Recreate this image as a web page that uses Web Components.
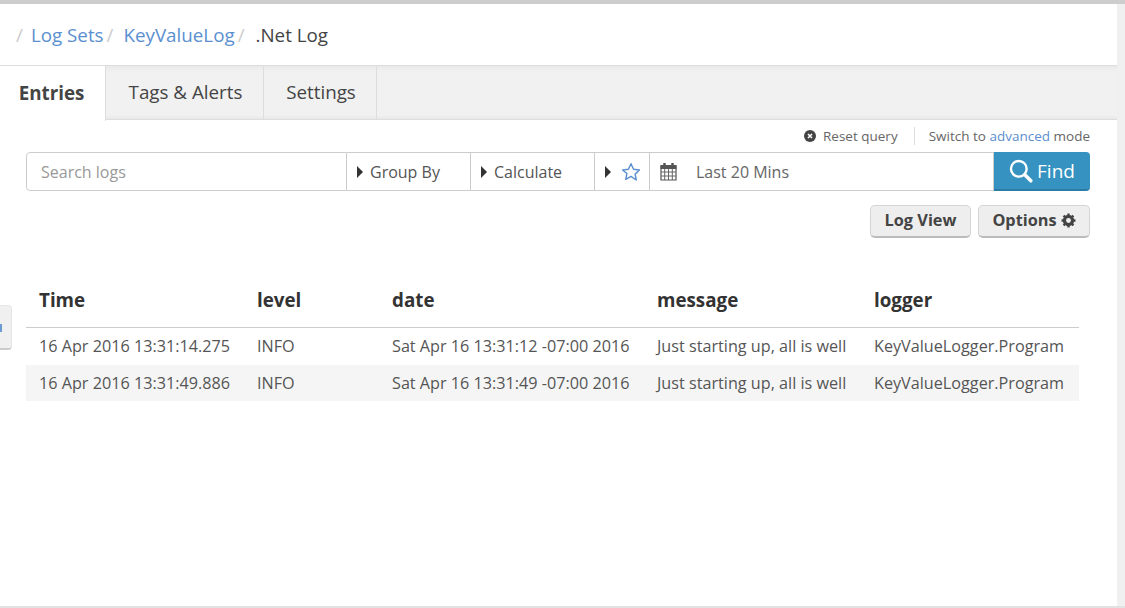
<!DOCTYPE html>
<html>
<head>
<meta charset="utf-8">
<style>
  html, body { margin: 0; height: 100%; }
  body { font-family: "Open Sans", sans-serif; color: #444; background: #fff; overflow: hidden; }
</style>
</head>
<body>
<log-page>
  <log-breadcrumb></log-breadcrumb>
  <log-tabs></log-tabs>
  <query-links></query-links>
  <query-bar></query-bar>
  <view-buttons></view-buttons>
  <log-table></log-table>
</log-page>
<script>
/* global HTMLElement:false */

const define = (name, html) => {
  const template = document.createElement('template')
  template.innerHTML = html
  window.customElements.define(name, class extends HTMLElement {
    constructor () {
      super()
      this.attachShadow({ mode: 'open' })
      this.shadowRoot.appendChild(template.content.cloneNode(true))
    }
  })
}

define('log-page', `
  <style>
    :host { display: flex; height: 608px; box-sizing: border-box; background: #f0f0f0; border-top: 4px solid #cdcdcd; border-bottom: 2px solid #e2e2e2; position: relative; }
    main { width: 1117px; background: #fff; display: flex; flex-direction: column; }
    .track { flex: 1; position: relative; }
    .handle { position: absolute; left: 0; top: 301px; width: 12px; height: 45px; box-sizing: border-box; background: #f0f0f0; border: 1px solid #e6e6e6; border-left: 0; border-bottom: 2px solid #ccc; border-radius: 0 4px 4px 0; }
    .handle i { position: absolute; left: 0; top: 18px; width: 2px; height: 8px; background: #6d9bd1; }
  </style>
  <main><slot></slot></main>
  <div class="track"></div>
  <div class="handle"><i></i></div>
`)

define('log-breadcrumb', `
  <style>
    :host { display: flex; align-items: center; height: 61px; padding-left: 16px; font-size: 18.8px; color: #ccc; white-space: nowrap; }
    a { color: #5b8fd0; margin-left: 8px; }
    span { margin-left: 3px; }
    b { font-weight: 400; color: #444; margin-left: 11px; }
  </style>
  / <a>Log Sets</a><span>/</span> <a style="margin-left:10px">KeyValueLog</a><span>/</span> <b>.Net Log</b>
`)

define('log-tabs', `
  <style>
    :host { display: flex; height: 55px; box-sizing: border-box; background: linear-gradient(#e9e9e9, #f1f1f1 6px, #f1f1f1 49px, #e8e8e8); border-top: 1px solid #ddd; border-bottom: 1px solid #ddd; font-size: 18.8px; }
    div { display: flex; align-items: center; justify-content: center; box-sizing: border-box; border-right: 1px solid #ddd; padding-bottom: 1px; }
    .on { width: 106px; background: #fff; font-weight: 700; height: 55px; margin-bottom: -1px; padding-right: 2px; }
    .a { width: 158px; padding-left: 2px; }
    .b { width: 113px; padding-left: 2px; }
  </style>
  <div class="on">Entries</div>
  <div class="a">Tags &amp; Alerts</div>
  <div class="b">Settings</div>
`)

define('query-links', `
  <style>
    :host { display: flex; justify-content: flex-end; align-items: center; height: 18px; margin: 7px 27px 7px 0; font-size: 13.500px; color: #666; white-space: nowrap; }
    svg { margin-right: 7px; }
    i { width: 1px; height: 18px; background: #ddd; margin: 0 14px 0 16px; }
    a { color: #5b8fd0; }
  </style>
  <svg width="12" height="12" viewBox="0 0 12 12"><circle cx="6" cy="6" r="6" fill="#444"/><path d="M4 4l4 4M8 4l-4 4" stroke="#fff" stroke-width="1.600"/></svg>
  Reset query<i></i><span>Switch to <a>advanced</a> mode</span>
`)

define('query-bar', `
  <style>
    :host { display: flex; height: 39px; box-sizing: border-box; margin: 0 27px 0 26px; font-size: 16px; white-space: nowrap; color: #555; }
    div { display: flex; align-items: center; box-sizing: border-box; border: 1px solid #ccc; border-left: 0; }
    .search { width: 321px; border-left: 1px solid #ccc; border-radius: 4px 0 0 4px; padding-left: 14px; color: #999; }
    .group { width: 124px; padding-left: 10px; }
    .calc { width: 124px; padding-left: 10px; }
    .star { width: 55px; padding-left: 10px; }
    .range { width: 344px; padding-left: 9px; color: #666; }
    .caret { width: 0; height: 0; border-style: solid; border-width: 6px 0 6px 6px; border-color: transparent transparent transparent #333; margin-right: 7px; }
    .star .caret { margin-right: 10px; }
    .range svg { margin-right: 18px; }
    button { flex: 1; font: inherit; font-size: 19px; color: #fff; background: #3692c0; border: 0; border-bottom: 2px solid #2c7ba5; border-radius: 0 4px 4px 0; display: flex; align-items: center; justify-content: center; padding: 0; gap: 4px; }
  </style>
  <div class="search">Search logs</div>
  <div class="group"><span class="caret"></span>Group By</div>
  <div class="calc"><span class="caret"></span>Calculate</div>
  <div class="star"><span class="caret"></span>
    <svg width="20" height="20" viewBox="0 0 18 18"><path d="M9 1.600l2.300 4.900 5.300.7-3.900 3.700 1 5.300L9 13l-4.700 2.600 1-5.300L1.400 7.200l5.300-.7z" fill="none" stroke="#5b8fd0" stroke-width="1.300" stroke-linejoin="round"/></svg>
  </div>
  <div class="range">
    <svg width="19" height="19" viewBox="0 0 18 19"><path d="M1.500 4h15v14h-15z" fill="#fff" stroke="#555" stroke-width="1.200"/><path d="M1 3h16v4H1z" fill="#555"/><path d="M5 1v4M13 1v4" stroke="#555" stroke-width="2.500"/><path d="M1.500 10h15M1.500 14h15M5.200 7v11M9 7v11M12.800 7v11" stroke="#666"/></svg>
    Last 20 Mins
  </div>
  <button>
    <svg width="24" height="24" viewBox="0 0 22 22"><circle cx="9" cy="9" r="7.200" fill="none" stroke="#fff" stroke-width="2.200"/><path d="M14.500 14.500l5.500 5.500" stroke="#fff" stroke-width="3.200" stroke-linecap="round"/></svg>
    Find
  </button>
`)

define('view-buttons', `
  <style>
    :host { display: flex; justify-content: flex-end; gap: 7px; margin: 14px 27px 0 0; }
    button { font: 700 16.300px "Open Sans", sans-serif; color: #444; height: 33px; box-sizing: border-box; background: #eee; border: 1px solid #d4d4d4; border-bottom: 2px solid #bbb; border-radius: 5px; padding: 0 0 2px; display: flex; align-items: center; justify-content: center; gap: 4px; }
    .l { width: 101px; }
    .o { width: 112px; }
    svg { width: 15px; height: 15px; }
  </style>
  <button class="l">Log View</button>
  <button class="o">Options
    <svg viewBox="0 0 14 14"><circle cx="7" cy="7" r="3.800" fill="none" stroke="#444" stroke-width="3"/><path d="M7 .5v3M7 10.500v3M.5 7h3M10.500 7h3M2.400 2.400l2.200 2.200M9.400 9.400l2.200 2.200M11.600 2.400L9.400 4.600M4.600 9.400l-2.200 2.200" stroke="#444" stroke-width="2.200"/></svg>
  </button>
`)

define('log-table', `
  <style>
    :host { display: block; margin: 44px 38px 0 26px; font-size: 16.200px; white-space: nowrap; }
    .row { display: grid; grid-template-columns: 218px 135px 265px 217px 1fr; height: 37px; align-items: center; padding-left: 13px; color: #555; }
    .row span { position: relative; top: -1px; }
    .head { height: 36px; font-size: 18.800px; font-weight: 700; color: #333; border-bottom: 1px solid #ccc; padding-bottom: 9px; }
    .head span { top: 0; }
    .alt { background: #f5f5f5; height: 36px; }
    .alt span { top: 0; }
  </style>
  <div class="row head"><span>Time</span><span>level</span><span>date</span><span>message</span><span>logger</span></div>
  <div class="row"><span>16 Apr 2016 13:31:14.275</span><span>INFO</span><span>Sat Apr 16 13:31:12 -07:00 2016</span><span>Just starting up, all is well</span><span>KeyValueLogger.Program</span></div>
  <div class="row alt"><span>16 Apr 2016 13:31:49.886</span><span>INFO</span><span>Sat Apr 16 13:31:49 -07:00 2016</span><span>Just starting up, all is well</span><span>KeyValueLogger.Program</span></div>
`)
</script>
</body>
</html>
